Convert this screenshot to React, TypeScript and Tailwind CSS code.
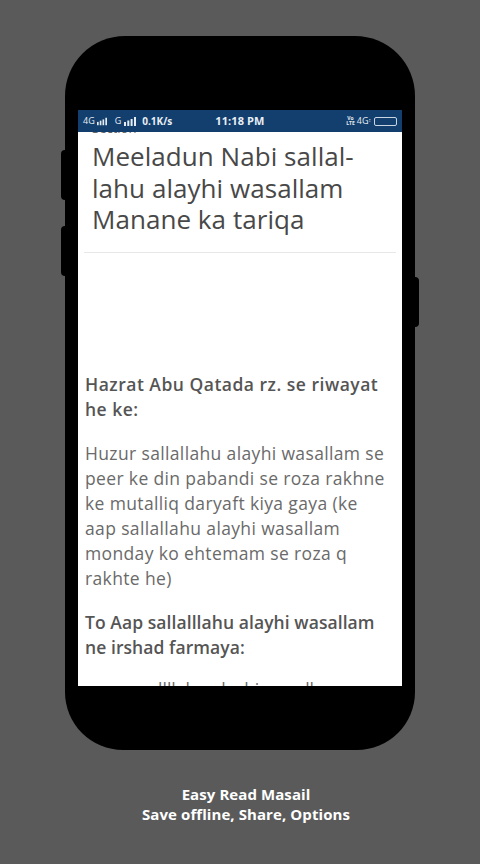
import React from "react";

const font = { fontFamily: '"Open Sans", "Noto Sans", sans-serif' };

function Bars({ w = 12 }: { w?: number }) {
  return (
    <svg width={w} height="9" viewBox="0 0 12 9" fill="#e4ecf4">
      <rect x="0" y="5" width="2" height="4" />
      <rect x="3.3" y="3.5" width="2" height="5.5" />
      <rect x="6.6" y="2" width="2" height="7" />
      <rect x="10" y="0" width="2" height="9" />
    </svg>
  );
}

export default function App() {
  return (
    <div className="w-[480px] h-[864px] overflow-hidden bg-[#5a5a5a] flex flex-col items-center pt-[36px]" style={font}>
      <div className="relative w-[350px] h-[714px] shrink-0 bg-black rounded-t-[60px] rounded-b-[58px] px-[13px] pt-[74px]">
        <div className="absolute left-[-4px] top-[114px] w-[4px] h-[50px] bg-black rounded-l-sm" />
        <div className="absolute left-[-4px] top-[190px] w-[4px] h-[50px] bg-black rounded-l-sm" />
        <div className="absolute right-[-4px] top-[241px] w-[4px] h-[50px] bg-black rounded-r-sm" />
        <div className="h-[576px] bg-white overflow-hidden flex flex-col">
          <div className="h-[22px] shrink-0 bg-[#123f6d] text-[#e8eef5] flex items-center pl-[5px] pr-[5px] text-[9px] font-semibold relative z-10">
            <span className="font-normal">4G</span>
            <span className="ml-[2px]"><Bars w={10} /></span>
            <span className="ml-[8px] font-normal">G</span>
            <span className="ml-[2px]"><Bars w={14} /></span>
            <span className="ml-[5px] text-[10px] font-bold">0.1K/s</span>
            <span className="ml-[43px] text-[11px] font-bold tracking-[0.1px]">11:18 PM</span>
            <span className="ml-auto text-[5px] leading-[5px] font-bold text-center">Vo<br />LTE</span>
            <span className="ml-[2px] text-[9px] font-normal">4G</span>
            <span className="text-[5px] font-normal">↕</span>
            <span className="ml-[3px] w-[23px] h-[9px] border border-[#c9d6e2] rounded-[2px]" />
          </div>
          <div className="flex-1 overflow-hidden text-[#555555]">
            <div className="h-[4px] pl-[14px] text-[13px] leading-[4px] text-[#666666] -translate-y-[6px]">Section</div>
            <div className="mx-[6px] px-[8px] pt-[5px] pb-[16px] border-b border-[#e8e8e8]">
              <h1 className="text-[26px] leading-[31.5px] font-normal text-[#484848] tracking-[0.05px]">
                Meeladun Nabi sallal-<br />lahu alayhi wasallam<br />Manane ka tariqa
              </h1>
            </div>
            <div className="px-[7px] pt-[119px]">
              <p className="text-[17.5px] leading-[25px] font-semibold tracking-[0.5px]">Hazrat Abu Qatada rz. se riwayat<br />he ke:</p>
              <p className="mt-[19px] text-[17.5px] leading-[25px] text-[#6a6a6a] tracking-[0.36px]">
                Huzur sallallahu alayhi wasallam se<br />peer ke din pabandi se roza rakhne<br />ke mutalliq daryaft kiya gaya (ke<br />aap sallallahu alayhi wasallam<br />monday ko ehtemam se roza q<br />rakhte he)
              </p>
              <p className="mt-[19px] text-[17.5px] leading-[25px] font-semibold tracking-[0.07px]">To Aap sallalllahu alayhi wasallam<br />ne irshad farmaya:</p>
              <p className="mt-[17px] text-[17.5px] leading-[25px] text-[#6a6a6a] text-center">sallllahu alayhi wasallam</p>
            </div>
          </div>
        </div>
      </div>
      <div className="mt-[34px] pl-[12px] text-white text-[15px] leading-[20px] font-bold text-center tracking-[0.08px]">
        Easy Read Masail<br />Save offline, Share, Options
      </div>
    </div>
  );
}
